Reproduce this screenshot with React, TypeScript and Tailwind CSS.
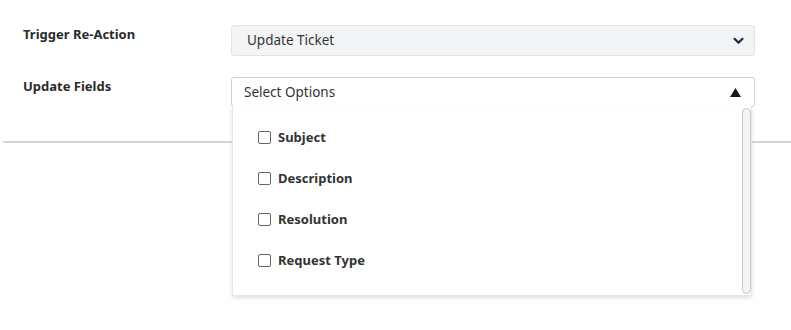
import React from "react";

const fields = ["Subject", "Description", "Resolution", "Request Type"];

const ChevronDown = () => (
  <svg width="11" height="8" viewBox="0 0 11 8" className="text-[#1f2a44]">
    <path d="M1.5 1.8 L5.5 5.6 L9.5 1.8" fill="none" stroke="currentColor" strokeWidth="2.2" strokeLinecap="round" strokeLinejoin="round" />
  </svg>
);

const TriangleUp = () => (
  <svg width="11" height="9" viewBox="0 0 11 9" className="text-[#1a1a1a]">
    <path d="M5.5 0 L11 9 L0 9 Z" fill="currentColor" />
  </svg>
);

const App = () => {
  return (
    <div className="w-[791px] h-[330px] bg-white text-[#333] font-['Noto_Sans','Open_Sans',sans-serif] pt-[25px]">
      <div className="flex items-start pl-[23px] pr-[36px]">
        <div className="w-[208px] text-[13px] font-bold leading-[18px] text-[#2b2b2b]">Trigger Re-Action</div>
        <div className="flex-1 h-[31px] flex items-center justify-between pl-[15px] pr-[10px] bg-[#f3f4f6] border border-[#e2e4e8] rounded-[3px] text-[13.5px] text-[#333]">
          <span>Update Ticket</span>
          <ChevronDown />
        </div>
      </div>

      <div className="flex items-start pl-[23px] pr-[36px] mt-[21px]">
        <div className="w-[208px] text-[13px] font-bold leading-[18px] text-[#2b2b2b]">Update Fields</div>
        <div className="flex-1 relative">
          <div className="h-[30px] flex items-center justify-between pl-[12px] pr-[13px] bg-white border border-[#cfcfcf] rounded-[3px] text-[13.5px] text-[#333]">
            <span>Select Options</span>
            <TriangleUp />
          </div>
          <div className="absolute left-[1px] right-[3px] top-[29px] h-[190px] bg-white border border-[#e6e6e6] border-t-0 shadow-[0_2px_4px_rgba(0,0,0,0.12)] z-10 flex">
            <div className="flex-1 flex flex-col pl-[25px] pt-[22px] gap-[22px]">
              {fields.map((f) => (
                <label key={f} className="flex items-center gap-[7px] h-[19px] text-[13px] font-bold text-[#333]">
                  <span className="w-[13px] h-[13px] border border-[#666] rounded-[2px] bg-white" />
                  <span>{f}</span>
                </label>
              ))}
            </div>
            <div className="w-[9px] mt-[2px] mb-[1px] rounded-full border border-[#c8c8c8] bg-[#f4f4f4]" />
          </div>
        </div>
      </div>

      <div className="ml-[3px] mt-[34px] h-[2px] bg-[#d4d4d4]" />
    </div>
  );
};

export default App;
